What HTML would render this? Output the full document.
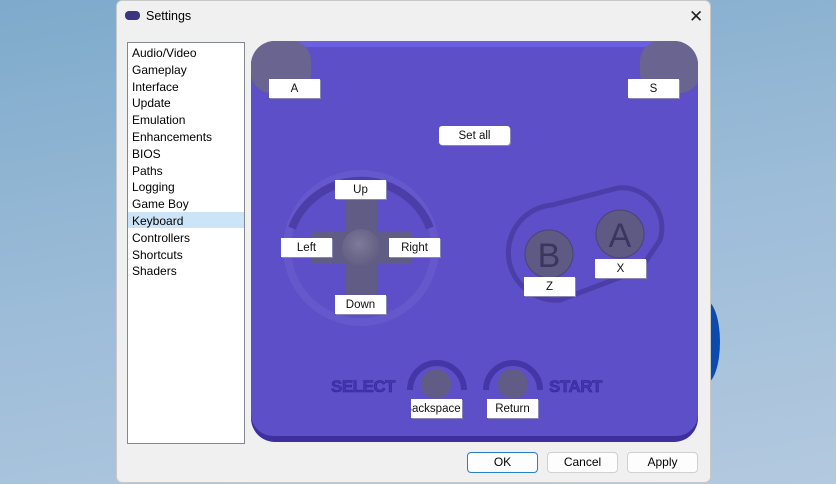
<!DOCTYPE html>
<html><head><meta charset="utf-8"><style>
*{margin:0;padding:0;box-sizing:border-box}
body{width:836px;height:484px;overflow:hidden;position:relative;font-family:"Liberation Sans","DejaVu Sans",sans-serif;background:linear-gradient(170deg,#7eaacb 0%,#9cbcd8 50%,#b3c9df 100%)}
.win{position:absolute;left:116px;top:0;width:595px;height:483px;background:#f0f0f0;border:1px solid #c8c8c8;border-radius:6px}
.t{position:absolute;font-size:12px;color:#000}
.lb{position:absolute;background:#fff;text-align:center;font-size:11.5px;line-height:21px;height:19px;color:#111;box-shadow:1px 1px 0 #8a86b8}
.btn{position:absolute;top:451px;height:21px;width:71px;background:#fdfdfd;border:1px solid #d0d0d0;border-radius:4px;font-size:12px;text-align:center;line-height:19px}
</style></head><body>
<div style="position:absolute;left:690px;top:300px;width:30px;height:84px;border-radius:50%;background:#0a4bb0"></div>
<div class="win">
<div style="position:absolute;left:8px;top:10px;width:15px;height:9px;border-radius:4px;background:#3b3580"></div>
<div class="t" style="left:29px;top:8px;font-size:12.5px">Settings</div>
<div style="position:absolute;left:572px;top:6px;font-size:17px;color:#222">✕</div>
<div style="position:absolute;left:10px;top:41px;width:118px;height:402px;background:#fff;border:1px solid #828790"></div>
<div style="position:absolute;left:11px;top:211px;width:116px;height:16px;background:#cce4f7"></div>
<div class="t" style="left:15px;top:44px;line-height:16.8px">Audio/Video<br>Gameplay<br>Interface<br>Update<br>Emulation<br>Enhancements<br>BIOS<br>Paths<br>Logging<br>Game Boy<br>Keyboard<br>Controllers<br>Shortcuts<br>Shaders</div>
<div class="btn" style="left:350px;border:1px solid #2a7fc8">OK</div>
<div class="btn" style="left:430px">Cancel</div>
<div class="btn" style="left:510px">Apply</div>
</div>
<svg style="position:absolute;left:0;top:0" width="836" height="484">
<defs><clipPath id="c"><rect x="251" y="41" width="447" height="401" rx="24"/></clipPath>
<radialGradient id="g" cx="0.45" cy="0.4" r="0.6"><stop offset="0" stop-color="#7e7a98"/><stop offset="1" stop-color="#615c82"/></radialGradient></defs>
<rect x="251" y="41" width="447" height="401" rx="24" fill="#3e2f9e"/>
<g clip-path="url(#c)">
<rect x="251" y="41" width="447" height="395" rx="22" fill="#5c4fc7"/>
<rect x="251" y="41" width="447" height="6" fill="#6c60e2"/>
<rect x="251" y="41" width="60" height="52" rx="20" fill="#6a6590"/>
<rect x="640" y="41" width="60" height="52" rx="20" fill="#6a6590"/>
</g>
<circle cx="361" cy="248" r="74" fill="none" stroke="#6558cc" stroke-width="8"/>
<path d="M292 228 A74 74 0 0 1 430 228" fill="none" stroke="#4b3ea8" stroke-width="8"/>
<rect x="346" y="198" width="31" height="108" fill="#615c86"/>
<rect x="312" y="232" width="100" height="32" rx="2" fill="#615c86"/>
<circle cx="361" cy="248" r="19" fill="url(#g)"/>
<path d="M552 205 L618 188 A40 40 0 0 1 660 240 L640 270 L560 300 A40 40 0 0 1 552 205 Z" fill="none" stroke="#4b3ea8" stroke-width="5"/>
<circle cx="549" cy="254" r="24" fill="#5f5a84" stroke="#4a4470" stroke-width="1"/>
<text x="549" y="267" font-size="34" text-anchor="middle" fill="#3a3660" font-family="Liberation Sans">B</text>
<circle cx="620" cy="234" r="24" fill="#5f5a84" stroke="#4a4470" stroke-width="1"/>
<text x="620" y="247" font-size="34" text-anchor="middle" fill="#3a3660" font-family="Liberation Sans">A</text>
<path d="M410 390 A27 27 0 0 1 464 390" fill="none" stroke="#4536a8" stroke-width="6"/>
<path d="M486 390 A27 27 0 0 1 540 390" fill="none" stroke="#4536a8" stroke-width="6"/>
<circle cx="436" cy="384" r="15" fill="#615c86"/>
<circle cx="513" cy="384" r="15" fill="#615c86"/>
<text x="331" y="392" style="font:bold 17px 'Liberation Sans',sans-serif;letter-spacing:-0.5px" fill="#4435b0" stroke="#2e2290" stroke-width="0.5">SELECT</text>
<text x="549" y="392" style="font:bold 17px 'Liberation Sans',sans-serif;letter-spacing:-0.5px" fill="#4435b0" stroke="#2e2290" stroke-width="0.5">START</text>
</svg>
<div class="lb" style="left:269px;top:79px;width:51px">A</div>
<div class="lb" style="left:628px;top:79px;width:51px">S</div>
<div class="lb" style="left:439px;top:126px;width:71px;border-radius:3px">Set all</div>
<div class="lb" style="left:335px;top:180px;width:51px">Up</div>
<div class="lb" style="left:281px;top:238px;width:51px">Left</div>
<div class="lb" style="left:389px;top:238px;width:51px">Right</div>
<div class="lb" style="left:335px;top:295px;width:51px">Down</div>
<div class="lb" style="left:595px;top:259px;width:51px">X</div>
<div class="lb" style="left:524px;top:277px;width:51px">Z</div>
<div class="lb" style="left:411px;top:399px;width:51px;overflow:hidden;text-indent:-8px">Backspace</div>
<div class="lb" style="left:487px;top:399px;width:51px">Return</div>
</body></html>
